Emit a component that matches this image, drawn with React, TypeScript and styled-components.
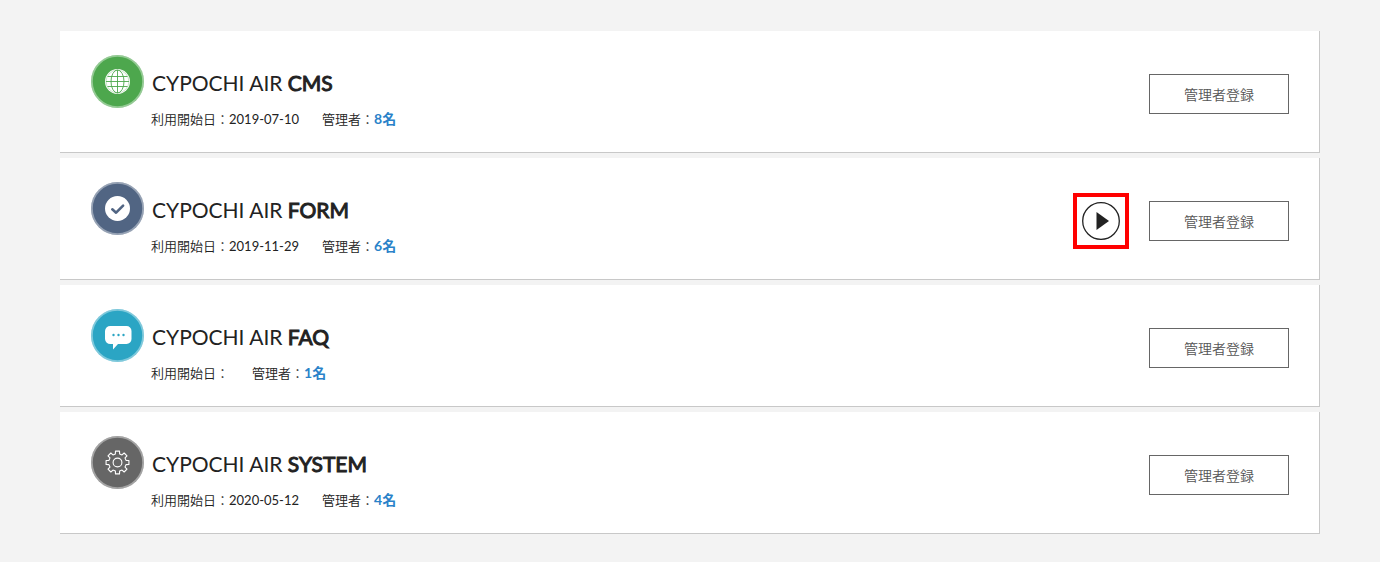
import React from "react";
import styled, { createGlobalStyle } from "styled-components";

const GlobalStyle = createGlobalStyle`
  *, *::before, *::after { box-sizing: border-box; }
  body {
    margin: 0;
    background: #f3f3f3;
    color: #222;
    font-family: Lato, "Noto Sans CJK JP", sans-serif;
    font-size: 13px;
  }
`;

const ServiceList = styled.ul`
  display: flex;
  flex-direction: column;
  gap: 5px;
  margin: 0;
  padding: 31px 60px 28px;
  list-style: none;
`;

const ServiceCard = styled.li`
  display: flex;
  align-items: flex-start;
  gap: 7px;
  padding: 24px 30px 23px 31px;
  background: #fff;
  border: solid #c8c8c8;
  border-width: 0 1px 1px 0;
`;

const Badge = styled.svg`
  flex: none;
  width: 53px;
  height: 53px;
`;

const Info = styled.div`
  flex: 1;
  padding-top: 13px;
`;

const Title = styled.h2`
  margin: 0;
  padding-left: 1px;
  font-size: 21px;
  font-weight: 400;
  line-height: 30px;
`;

const ProductName = styled.strong`
  font-weight: 400;
  -webkit-text-stroke: 1px currentColor;
`;

const Meta = styled.dl`
  display: flex;
  gap: 23px;
  margin: 11px 0 0;
  line-height: 20px;
`;

const MetaItem = styled.div`
  display: flex;
`;

const Label = styled.dt`
  font-weight: 350;
`;

const StartDate = styled.dd`
  margin: 0;
`;

const AdminCount = styled.dd`
  margin: 0;
  color: #2a82c9;
  font-size: 14px;
  font-weight: 700;
`;

const Actions = styled.div`
  display: flex;
  align-items: center;
  gap: 20px;
  height: 56px;
  margin-top: 11px;
`;

const PlayButton = styled.button`
  display: grid;
  place-items: center;
  width: 56px;
  height: 56px;
  padding: 0;
  background: #fff;
  border: 4px solid #f00;
  cursor: pointer;
`;

const RegisterButton = styled.button`
  width: 140px;
  height: 40px;
  padding: 0;
  background: #fff;
  border: 1px solid #666;
  color: #555;
  font-family: inherit;
  font-size: 14px;
  font-weight: 350;
  cursor: pointer;
`;

type Kind = "cms" | "form" | "faq" | "system";

const badgeColors: Record<Kind, string> = {
  cms: "#4da74d",
  form: "#516583",
  faq: "#2ba5c4",
  system: "#666666",
};

/* Outline of an eight-toothed gear centred on the badge */
const gearPath = (() => {
  const points: string[] = [];
  const at = (r: number, deg: number) => {
    const a = (deg * Math.PI) / 180;
    return `${(26.5 + r * Math.cos(a)).toFixed(2)} ${(26.5 + r * Math.sin(a)).toFixed(2)}`;
  };
  for (let i = 0; i < 8; i++) {
    const c = i * 45;
    points.push(at(8.8, c - 14), at(11.6, c - 10), at(11.6, c + 10), at(8.8, c + 14));
  }
  return `M${points.join("L")}Z`;
})();

const glyphs: Record<Kind, React.ReactNode> = {
  cms: (
    <>
      <circle cx="26.5" cy="26.5" r="12.5" fill="#fff" />
      <g fill="none" stroke="#4da74d" strokeWidth="0.9">
        <circle cx="26.5" cy="26.5" r="11.4" strokeWidth="0.3" />
        <ellipse cx="26.5" cy="26.5" rx="6.5" ry="11.5" />
        <path d="M26.5 15v23M15 26.5h23M16.5 21.5h20M16.5 31.5h20" />
      </g>
    </>
  ),
  form: (
    <>
      <circle cx="26.5" cy="26.5" r="12.5" fill="#fff" />
      <path d="M21.3 27.3l3.8 3.4 7-7" fill="none" stroke="#516583" strokeWidth="2.6" strokeLinecap="round" strokeLinejoin="round" />
    </>
  ),
  faq: (
    <>
      <path d="M19.5 17h16a5 5 0 0 1 5 5v8a5 5 0 0 1-5 5h-8.5L22 40.5V35h-2.5a5.3 5.3 0 0 1-5.5-5v-8a5.3 5.3 0 0 1 5.5-5z" fill="#fff" />
      <g fill="#2ba5c4">
        <circle cx="22.5" cy="26" r="1.2" />
        <circle cx="27.5" cy="26" r="1.2" />
        <circle cx="32.5" cy="26" r="1.2" />
      </g>
    </>
  ),
  system: (
    <g fill="none" stroke="#fff" strokeWidth="1.1" strokeLinejoin="round">
      <path d={gearPath} />
      <circle cx="26.5" cy="26.5" r="4.4" />
    </g>
  ),
};

function ServiceBadge({ kind }: { kind: Kind }) {
  return (
    <Badge viewBox="0 0 53 53" aria-hidden="true">
      <circle cx="26.5" cy="26.5" r="26.5" fill={badgeColors[kind]} />
      <circle cx="26.5" cy="26.5" r="25.6" fill="none" stroke="#fff" strokeOpacity="0.4" strokeWidth="1.8" />
      {glyphs[kind]}
    </Badge>
  );
}

interface Service {
  kind: Kind;
  name: string;
  startDate: string;
  admins: number;
  playable?: boolean;
}

const services: Service[] = [
  { kind: "cms", name: "CMS", startDate: "2019-07-10", admins: 8 },
  { kind: "form", name: "FORM", startDate: "2019-11-29", admins: 6, playable: true },
  { kind: "faq", name: "FAQ", startDate: "", admins: 1 },
  { kind: "system", name: "SYSTEM", startDate: "2020-05-12", admins: 4 },
];

export default function App() {
  return (
    <>
      <GlobalStyle />
      <ServiceList>
        {services.map((service) => (
          <ServiceCard key={service.kind}>
            <ServiceBadge kind={service.kind} />
            <Info>
              <Title>
                CYPOCHI AIR <ProductName>{service.name}</ProductName>
              </Title>
              <Meta>
                <MetaItem>
                  <Label>利用開始日：</Label>
                  <StartDate>{service.startDate}</StartDate>
                </MetaItem>
                <MetaItem>
                  <Label>管理者：</Label>
                  <AdminCount>{service.admins}名</AdminCount>
                </MetaItem>
              </Meta>
            </Info>
            <Actions>
              {service.playable && (
                <PlayButton type="button" aria-label={`${service.name}を開く`}>
                  <svg width="38" height="38" viewBox="0 0 38 38" aria-hidden="true">
                    <circle cx="19" cy="19" r="18.3" fill="none" stroke="#222" strokeWidth="1.3" />
                    <path d="M14.5 10v18L27 19z" fill="#222" />
                  </svg>
                </PlayButton>
              )}
              <RegisterButton type="button">管理者登録</RegisterButton>
            </Actions>
          </ServiceCard>
        ))}
      </ServiceList>
    </>
  );
}
